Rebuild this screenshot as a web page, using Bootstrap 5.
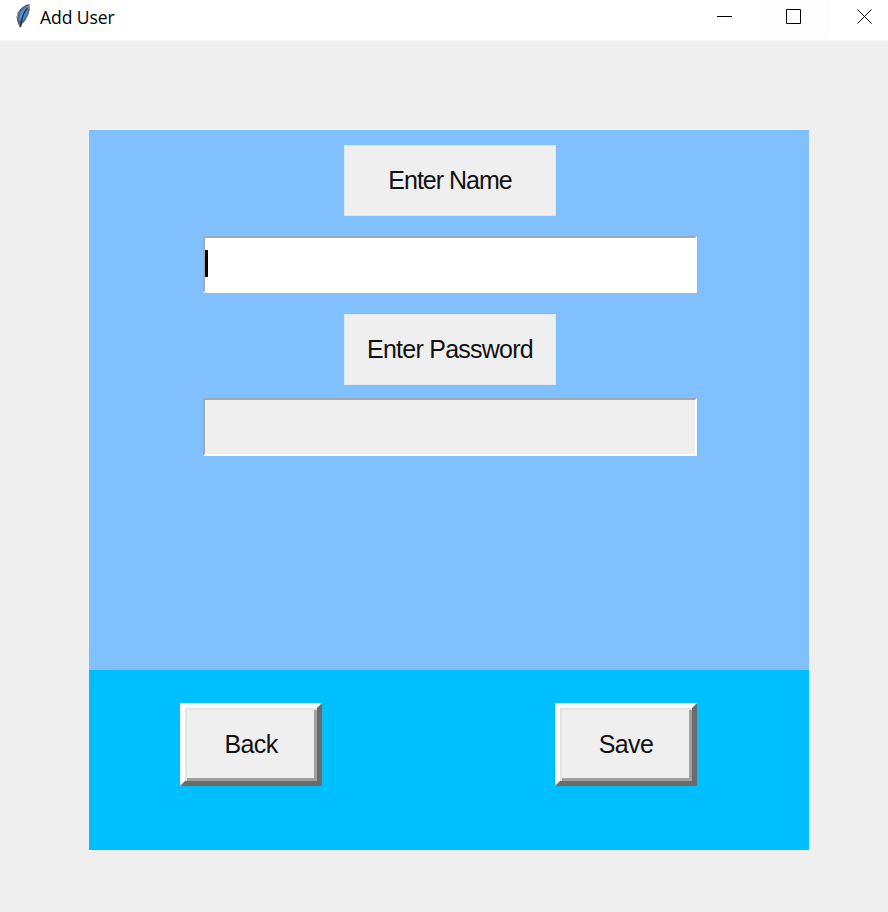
<!DOCTYPE html>
<html lang="en">
<head>
<meta charset="utf-8">
<meta name="viewport" content="width=device-width, initial-scale=1">
<title>Add User</title>
<link href="https://cdn.jsdelivr.net/npm/bootstrap@5.3.0/dist/css/bootstrap.min.css" rel="stylesheet">
<style>
body { background: #efefef; color: #111; font: 25px/30px "Liberation Sans", Arial, sans-serif; letter-spacing: -.75px; }
.titlebar { height: 41px; border-bottom: 1px solid #f5f5f5; padding-left: 15px; }
.titlebar h1 { font: 17.6px/24px "Open Sans", "Noto Sans", sans-serif; letter-spacing: -.1px; color: #000; margin: 5px 0 0 9px; }
.feather { margin-top: 4px; }
.win-btn { border: 0; padding: 0; width: 69px; height: 38px; background: #fff; }
.win-btn svg { display: block; margin: 0 0 5px 26px; }
.win-btn.win-max { background: #fdfdfd; }
.win-btn.win-close { width: 59px; }
.win-btn.win-close svg { margin-left: 28px; }
.panel { width: 720px; margin: 89px 0 0 89px; }
.form-area { height: 540px; background: #80c0ff; padding: 15px 0 0 2px; }
.tk-label { width: 212px; height: 71px; padding-bottom: 2px; background: #efefef; box-shadow: inset 0 0 0 1px #dfe8f1; }
.label-name { letter-spacing: -1px; }
.tk-entry { width: 494px; height: 57px; border: 2px solid; border-color: #a3a9b0 #fff #fff #a3a9b0; border-radius: 0; margin: 20px 0 21px; background: #fff; }
.tk-entry.entry-idle { background: #efefef; height: 58px; margin: 13px 0 0; }
.caret { width: 3px; height: 27px; background: #000; margin-top: 12px; }
.actions { height: 180px; background: #00bfff; padding: 33px 112px 0 91px; }
.tk-btn { width: 142px; height: 83px; padding: 0 0 2px; border: 5px solid; border-color: #fff #6b6b6b #6b6b6b #fff; background: #efefef; box-shadow: inset 2px 2px #e3e3e3, inset -3px -3px #a0a0a0; color: #111; font: inherit; letter-spacing: -.6px; }
</style>
</head>
<body class="overflow-hidden">
<header class="titlebar d-flex bg-white">
  <svg class="feather" width="16" height="24" viewBox="0 0 16 24" aria-hidden="true">
    <path d="M14.500 0 Q11 0 7.500 3 Q2.500 7 1.500 13 L2.500 18 L4.500 23 H6 L7 20 L10 17 Q14 11 15 5Z" fill="#596572"/>
    <path d="M13 2 Q8 4 5 9 L4 16 L6.500 17.500 Q11 14 12.500 8 Q14 4 13 2Z" fill="#4d8fd5"/>
    <path d="M12.500 4 Q7 10 5.500 23" fill="none" stroke="#172b43" stroke-width="1.200"/>
    <path d="M14 1 V5 M3 8 L2 14" stroke="#aaa" fill="none"/>
  </svg>
  <h1>Add User</h1>
  <div class="d-flex ms-auto">
    <button class="win-btn" aria-label="Minimize"><svg width="16" height="16"><path d="M0 7.500H15" stroke="#000"/></svg></button>
    <button class="win-btn win-max" aria-label="Maximize"><svg width="16" height="16"><path d="M.5 .5H14.500V14.500H.5Z" fill="none" stroke="#000"/></svg></button>
    <button class="win-btn win-close" aria-label="Close"><svg width="16" height="16"><path d="M.5 .5L14.500 14.500M14.500 .5L.5 14.500" stroke="#000"/></svg></button>
  </div>
</header>
<main class="panel">
  <section class="form-area d-flex flex-column align-items-center">
    <div class="tk-label label-name d-flex align-items-center justify-content-center">Enter Name</div>
    <div class="tk-entry" role="textbox" aria-label="Name"><div class="caret"></div></div>
    <div class="tk-label d-flex align-items-center justify-content-center">Enter Password</div>
    <div class="tk-entry entry-idle" role="textbox" aria-label="Password"></div>
  </section>
  <section class="actions d-flex justify-content-between align-items-start">
    <button class="tk-btn">Back</button>
    <button class="tk-btn">Save</button>
  </section>
</main>
<script src="https://cdn.jsdelivr.net/npm/bootstrap@5.3.0/dist/js/bootstrap.bundle.min.js"></script>
</body>
</html>
